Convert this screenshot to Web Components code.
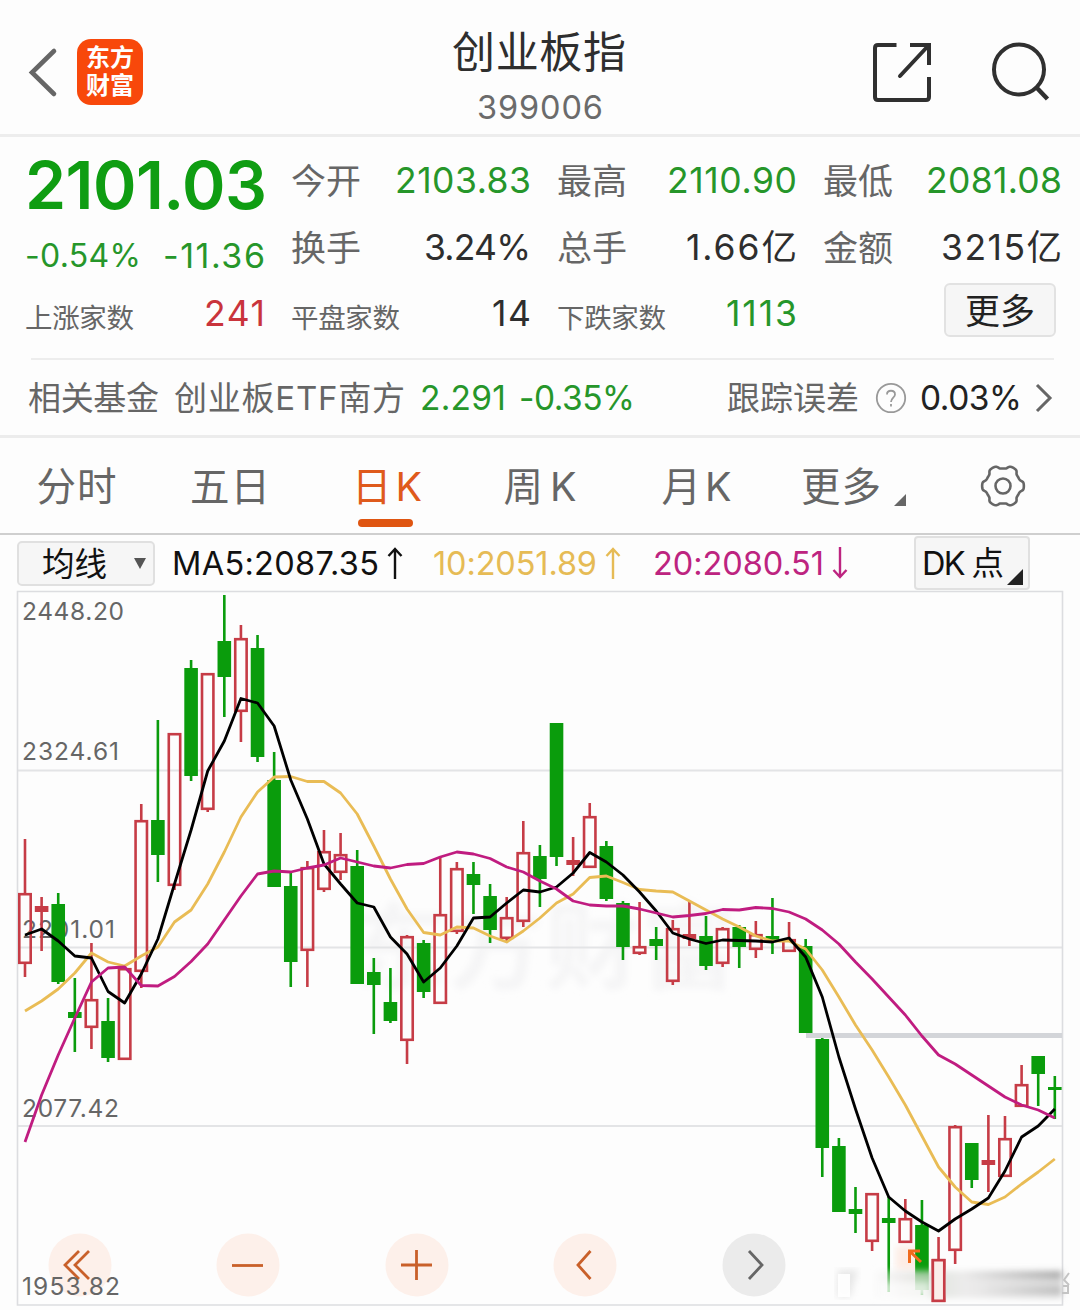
<!DOCTYPE html>
<html lang="zh-CN">
<head>
<meta charset="utf-8">
<title>创业板指 399006</title>
<style>
  body {
    margin: 0;
    background: #fdfdfd;
    font-family: Inter, "Noto Sans CJK SC", sans-serif;
    font-weight: 400;
    color: #2e2e2e;
  }
</style>
</head>
<body>
<stock-page></stock-page>
<script>
// Text run whose letter spacing is adjusted so that it fills `span` pixels.
class TrackedText extends HTMLElement {
  constructor() {
    super();
    this.attachShadow({ mode: "open" });
    this.shadowRoot.innerHTML = `
      <style>
        :host { display: inline-block; white-space: nowrap; flex: none; }
        span { display: inline-block; }
      </style>
      <span><slot></slot></span>
    `;
  }

  connectedCallback() {
    const run = this.shadowRoot.querySelector("span");
    const target = Number(this.getAttribute("span"));
    const count = this.textContent.length;
    if (!target || count < 2) {
      return;
    }
    const spacing = (target - run.getBoundingClientRect().width) / (count - 1);
    run.style.letterSpacing = `${spacing}px`;
    run.style.marginRight = `${-spacing}px`;
  }
}

class StockHeader extends HTMLElement {
  constructor() {
    super();
    this.attachShadow({ mode: "open" });
    this.shadowRoot.innerHTML = `
      <style>
        :host {
          display: grid;
          grid-template-columns: 440px 200px 440px;
          height: 134px;
          border-bottom: 3px solid #ededed;
        }
        .left { display: flex; align-items: center; padding: 10px 0 0 27px; height: 124px; gap: 19px; }
        .logo {
          display: flex;
          flex-direction: column;
          justify-content: center;
          width: 66px;
          height: 66px;
          border-radius: 14px;
          background: #f8480b;
          color: #fff;
          font-size: 24px;
          font-weight: 700;
          line-height: 28px;
          text-align: center;
        }
        .title { display: flex; flex-direction: column; align-items: center; padding: 22px 2px 0 0; }
        h1 { margin: 0; font-size: 43px; font-weight: 400; line-height: 60px; }
        .code { margin: 6px 0 0 2px; font-size: 32.5px; line-height: 40px; color: #6b6b6b; }
        .right { display: flex; justify-content: flex-end; gap: 56px; padding: 38px 25px 0 0; }
        svg { display: block; fill: none; }
      </style>
      <div class="left">
        <svg width="31" height="52" viewBox="0 0 31 52" stroke="#666" stroke-width="4.6" stroke-linecap="round">
          <path d="M27 5 5 26.500l22 21.500"/>
        </svg>
        <div class="logo"><span>东方</span><span>财富</span></div>
      </div>
      <div class="title">
        <h1><tracked-text span="174">创业板指</tracked-text></h1>
        <div class="code"><tracked-text span="126">399006</tracked-text></div>
      </div>
      <div class="right">
        <svg width="66" height="68" viewBox="0 0 66 68" stroke="#303030" stroke-width="4">
          <path d="M29.500 7H11q-3 0-3 3v49q0 3 3 3h48q3 0 3-3V39M43 7h19v20"/>
          <path d="M61 8 33 38" stroke-linecap="round"/>
        </svg>
        <svg width="66" height="68" viewBox="0 0 66 68" stroke="#303030" stroke-width="4">
          <circle cx="30" cy="31.500" r="25"/>
          <path d="M47.500 49.500 58.500 61" stroke-width="4.500"/>
        </svg>
      </div>
    `;
  }
}

class QuoteCell extends HTMLElement {
  constructor() {
    super();
    this.attachShadow({ mode: "open" });
    this.shadowRoot.innerHTML = `
      <style>
        :host { display: flex; justify-content: space-between; align-items: center; height: 66.5px; font-size: 35.5px; line-height: 50px; }
        .label { color: #666; font-size: 35px; }
        :host([small]) .label { font-size: 27.5px; padding-top: 8px; }
        :host([tone="down"]) .value { color: #26962a; }
        :host([tone="up"]) .value { color: #c9343c; }
      </style>
      <span class="label"><slot name="label"></slot></span>
      <span class="value"><slot></slot></span>
    `;
  }
}

class QuoteBoard extends HTMLElement {
  constructor() {
    super();
    this.attachShadow({ mode: "open" });
    this.shadowRoot.innerHTML = `
      <style>
        :host { display: block; height: 221px; border-bottom: 2px solid #ededed; margin: 0 26px 0 31px; }
        .grid {
          display: grid;
          grid-template-columns: 240px 240px 240px 239px;
          column-gap: 26px;
          margin: 0 -10px 0 -6px;
          padding-top: 11px;
        }
        .last { grid-row: span 2; height: 133px; }
        .price { height: 74px; font-size: 66px; font-weight: 600; line-height: 74px; color: #0f9d12; }
        .change { display: flex; justify-content: space-between; align-items: center; height: 58px; padding-top: 10px; box-sizing: border-box; color: #26962a; font-size: 34px; line-height: 40px; }
        .change :first-child { font-size: 32px; }
        .more { text-align: right; padding-top: 2px; }
        button {
          width: 112px;
          height: 54px;
          margin: 0 6px 0 0;
          padding: 3px 0 0;
          border: 2px solid #e2e2e2;
          border-radius: 6px;
          background: #f6f6f6;
          color: #222;
          font: inherit;
          font-size: 35px;
          line-height: 47px;
        }
      </style>
      <div class="grid">
        <div class="last">
          <div class="price"><tracked-text span="242">2101.03</tracked-text></div>
          <div class="change"><tracked-text span="116">-0.54%</tracked-text><tracked-text span="102">-11.36</tracked-text></div>
        </div>
        <quote-cell tone="down"><span slot="label">今开</span><tracked-text span="136">2103.83</tracked-text></quote-cell>
        <quote-cell tone="down"><span slot="label">最高</span><tracked-text span="130">2110.90</tracked-text></quote-cell>
        <quote-cell tone="down"><span slot="label">最低</span><tracked-text span="136">2081.08</tracked-text></quote-cell>
        <quote-cell><span slot="label">换手</span><tracked-text span="107">3.24%</tracked-text></quote-cell>
        <quote-cell><span slot="label">总手</span><tracked-text span="111">1.66亿</tracked-text></quote-cell>
        <quote-cell><span slot="label">金额</span><tracked-text span="121">3215亿</tracked-text></quote-cell>
        <quote-cell small tone="up"><tracked-text slot="label" span="109">上涨家数</tracked-text><tracked-text span="61">241</tracked-text></quote-cell>
        <quote-cell small><tracked-text slot="label" span="109">平盘家数</tracked-text><tracked-text span="39">14</tracked-text></quote-cell>
        <quote-cell small tone="down"><tracked-text slot="label" span="109">下跌家数</tracked-text><tracked-text span="71">1113</tracked-text></quote-cell>
        <div class="more"><button>更多</button></div>
      </div>
    `;
  }
}

class FundRow extends HTMLElement {
  constructor() {
    super();
    this.attachShadow({ mode: "open" });
    this.shadowRoot.innerHTML = `
      <style>
        :host {
          display: flex;
          align-items: center;
          height: 74px;
          padding: 1px 26px 0 28px;
          border-bottom: 3px solid #ececec;
          font-size: 33.5px;
          line-height: 50px;
          color: #666;
        }
        .down { color: #26962a; }
        .name { margin: 0 15px 0 15px; }
        .rate { margin-left: 13px; }
        .error { margin-left: auto; }
        .cjk { font-size: 33px; }
        .value { color: #222; }
        svg { display: block; fill: none; flex: none; }
        .help { margin: 0 13px 0 16px; }
        .arrow { margin-left: 12px; }
      </style>
      <tracked-text class="cjk" span="131">相关基金</tracked-text>
      <tracked-text class="cjk name" span="231">创业板ETF南方</tracked-text>
      <tracked-text class="down" span="86">2.291</tracked-text>
      <tracked-text class="down rate" span="116">-0.35%</tracked-text>
      <tracked-text class="cjk error" span="132">跟踪误差</tracked-text>
      <svg class="help" width="32" height="32" viewBox="0 0 32 32" stroke="#999" stroke-width="1.800">
        <circle cx="16" cy="16" r="14.200"/>
        <path d="M12 12.500c0-5 8-5 8 0 0 3-4 3.500-4 7.500M16 22v2.500"/>
      </svg>
      <tracked-text class="value" span="102">0.03%</tracked-text>
      <svg class="arrow" width="20" height="30" viewBox="0 0 20 30" stroke="#666" stroke-width="3">
        <path d="M3 2l13 13L3 28"/>
      </svg>
    `;
  }
}

class PeriodTabs extends HTMLElement {
  constructor() {
    super();
    this.attachShadow({ mode: "open" });
    this.shadowRoot.innerHTML = `
      <style>
        :host {
          display: grid;
          grid-template-columns: 153px 154px 160px 146px 167px 147px 152px;
          justify-items: center;
          height: 95px;
          border-bottom: 2px solid #cfcfcf;
          font-size: 39.5px;
          line-height: 58px;
          color: #666;
        }
        .tab { display: flex; flex-direction: column; align-items: center; padding-top: 20px; }
        .active { color: #df5a1c; }
        .active::after { content: ""; width: 55px; height: 8px; margin: 3px 4px 0 0; border-radius: 4px; background: #df5511; }
        .more { flex-direction: row; align-items: flex-start; gap: 13px; }
        .more::after { content: ""; margin-top: 36px; border-style: solid; border-width: 0 0 12px 12px; border-color: transparent transparent #666; }
        svg { display: block; margin-top: 24px; fill: none; }
      </style>
      <div class="tab"><tracked-text span="80">分时</tracked-text></div>
      <div class="tab"><tracked-text span="80">五日</tracked-text></div>
      <div class="tab active"><tracked-text span="70">日 K</tracked-text></div>
      <div class="tab"><tracked-text span="73">周 K</tracked-text></div>
      <div class="tab"><tracked-text span="70">月 K</tracked-text></div>
      <div class="tab more"><tracked-text span="80">更多</tracked-text></div>
      <svg width="48" height="48" viewBox="-24 -24 48 48" stroke="#666" stroke-width="2.600" stroke-linejoin="round">
        <path id="gear"/>
        <circle r="7.500"/>
      </svg>
    `;
    this.shadowRoot.querySelector("#gear").setAttribute("d", this._gearPath());
  }

  // Six soft lobes, one of them pointing to each side.
  _gearPath() {
    const points = [];
    for (let deg = 0; deg < 360; deg += 3) {
      const t = (deg * Math.PI) / 180;
      const r = 19.2 + 1.7 * Math.tanh(2.2 * Math.cos(6 * t));
      points.push(`${(r * Math.cos(t)).toFixed(2)} ${(r * Math.sin(t)).toFixed(2)}`);
    }
    return `M${points.join("L")}Z`;
  }
}

class MaLegend extends HTMLElement {
  constructor() {
    super();
    this.attachShadow({ mode: "open" });
    this.shadowRoot.innerHTML = `
      <style>
        :host { display: flex; align-items: flex-start; height: 55px; padding-left: 17px; font-size: 32.5px; line-height: 42px; color: #111; }
        .select, .dk { display: flex; box-sizing: border-box; border: 2px solid #e0e0e0; background: #f6f6f6; }
        .select { width: 138px; height: 45px; margin: 6px 17px 0 0; padding: 3px 7px 0 23px; border-radius: 5px; justify-content: space-between; align-items: center; }
        .select::after { content: ""; margin-bottom: 3px; border: 6.5px solid transparent; border-top: 11px solid #555; border-bottom: 0; }
        .ma { display: flex; align-items: center; margin-top: 8px; }
        .ma svg { display: block; margin: 0 0 2px 8px; fill: none; stroke: currentColor; stroke-width: 2.4; }
        .ma10 { margin-left: 30px; color: #e6bb55; }
        .ma20 { margin-left: 32px; color: #bd2480; }
        .dk { width: 116px; height: 54px; margin: 1px 0 0 66px; padding: 5px 5px 0 6px; border-radius: 4px; justify-content: space-between; }
        .dk::after { content: ""; align-self: flex-end; margin-bottom: 3px; border-style: solid; border-width: 0 0 16px 16px; border-color: transparent transparent #222; }
      </style>
      <div class="select"><tracked-text span="65">均线</tracked-text></div>
      <div class="ma"><tracked-text span="207">MA5:2087.35</tracked-text>
        <svg width="16" height="34" viewBox="0 0 16 34"><path d="M8 33V3M1.500 10 8 3l6.500 7"/></svg>
      </div>
      <div class="ma ma10"><tracked-text span="164">10:2051.89</tracked-text>
        <svg width="16" height="34" viewBox="0 0 16 34"><path d="M8 33V3M1.500 10 8 3l6.500 7"/></svg>
      </div>
      <div class="ma ma20"><tracked-text span="171">20:2080.51</tracked-text>
        <svg width="16" height="34" viewBox="0 0 16 34"><path d="M8 1v30M1.500 24 8 31l6.500-7"/></svg>
      </div>
      <div class="dk"><tracked-text span="82">DK 点</tracked-text></div>
    `;
  }
}

// Each candle: direction, high, body top, body bottom, low.
const CANDLES = [
  ["u", 839, 893, 964, 977], ["u", 897, 906, 912, 951], ["d", 893, 904, 982, 984],
  ["d", 978, 1012, 1018, 1052], ["u", 943, 999, 1028, 1049], ["d", 998, 1021, 1058, 1062],
  ["u", 967, 968, 1060, 1060], ["u", 804, 820, 972, 988], ["d", 720, 820, 855, 882],
  ["u", 733, 733, 886, 890], ["d", 660, 668, 776, 781], ["u", 673, 673, 810, 812],
  ["d", 595, 641, 677, 717], ["u", 625, 638, 712, 742], ["d", 635, 648, 757, 762],
  ["d", 752, 780, 887, 887], ["d", 871, 886, 962, 987], ["u", 861, 867, 951, 987],
  ["u", 830, 851, 890, 892], ["u", 833, 854, 873, 880], ["d", 850, 866, 984, 984],
  ["d", 958, 972, 985, 1034], ["d", 968, 1002, 1021, 1023], ["u", 935, 936, 1041, 1064],
  ["d", 940, 943, 992, 998], ["u", 857, 914, 1004, 1004], ["u", 862, 868, 932, 934],
  ["d", 862, 874, 885, 914], ["d", 884, 896, 930, 943], ["u", 897, 917, 939, 941],
  ["u", 821, 852, 922, 927], ["d", 845, 856, 879, 907], ["d", 723, 723, 857, 866],
  ["u", 837, 860, 865, 876], ["u", 803, 816, 868, 868], ["d", 841, 846, 899, 901],
  ["d", 901, 903, 947, 960], ["u", 902, 946, 954, 955], ["d", 927, 939, 946, 960],
  ["u", 920, 928, 982, 985], ["u", 902, 934, 939, 946], ["d", 916, 936, 966, 970],
  ["u", 927, 928, 964, 967], ["d", 925, 927, 947, 968], ["u", 921, 934, 950, 958],
  ["d", 898, 936, 940, 954], ["u", 922, 939, 952, 952], ["d", 939, 946, 1033, 1033],
  ["d", 1038, 1039, 1148, 1177], ["d", 1138, 1146, 1212, 1212], ["d", 1187, 1209, 1214, 1233],
  ["u", 1193, 1193, 1242, 1251], ["d", 1197, 1218, 1223, 1292], ["u", 1199, 1218, 1243, 1243],
  ["d", 1200, 1225, 1290, 1295], ["u", 1237, 1259, 1302, 1302], ["u", 1125, 1126, 1251, 1264],
  ["d", 1143, 1143, 1180, 1188], ["u", 1115, 1160, 1165, 1192], ["u", 1116, 1138, 1177, 1177],
  ["u", 1065, 1084, 1107, 1107], ["d", 1056, 1056, 1074, 1106], ["d", 1076, 1087, 1090, 1119],
];

const AVERAGES = {
  "#e9bc55": [1011, 1001, 989, 973, 953, 962, 966, 956, 947, 922, 910, 884, 852, 817, 792, 777, 776.5, 781.5, 781.5, 793, 814, 846, 879, 909, 932.5, 935, 927, 928, 936, 942, 931, 918, 903, 894, 877.5, 876, 882.5, 889.5, 891, 892, 901, 910, 919, 927, 936, 941, 941, 949, 970, 997, 1025, 1050, 1077, 1105, 1136, 1167, 1187, 1202, 1204.5, 1197, 1184, 1172, 1159],
  "#000": [935, 929, 941, 956, 958, 991.5, 1003, 974, 939, 884, 830, 771, 741, 698.5, 703, 726, 780, 819, 864, 884, 903, 907, 937, 954, 982, 968, 946, 918, 917, 903, 890, 892, 887, 873, 852.5, 862, 875, 892, 911, 933, 939, 943.5, 940, 940.5, 941, 942, 938, 957, 997, 1057, 1109, 1158, 1197, 1211, 1222, 1231, 1219, 1209, 1198, 1171, 1137, 1126, 1109],
  "#c01c80": [1142, 1095, 1055, 1018, 982, 968, 967, 985.5, 986, 976.5, 961.5, 944, 920, 896, 874, 871, 872, 868, 865, 858, 862, 866, 868, 864.5, 863.5, 857, 852, 854, 858.5, 867, 872, 881, 889, 901, 905, 906, 906, 909, 913, 917, 915.5, 913.5, 909.5, 910, 907.5, 908.5, 912, 919, 930, 944, 962, 979, 997, 1015, 1036, 1055, 1064, 1075, 1086, 1097, 1105, 1110, 1118],
};

class KlineChart extends HTMLElement {
  constructor() {
    super();
    this.attachShadow({ mode: "open" });
    this.render();
  }

  _x(index) {
    return 25 + index * 16.61;
  }

  _candle([direction, high, top, bottom, low], index) {
    const x = this._x(index);
    const color = direction === "u" ? "#c63c46" : "#0a9c0c";
    const hollow = direction === "u" && bottom - top > 7;
    const body = hollow
      ? `<rect x="${x - 5.7}" y="${top + 1.2}" width="11.400" height="${bottom - top - 2.4}" fill="none" stroke="${color}" stroke-width="2.600"/>`
      : `<rect x="${x - 6.8}" y="${top}" width="13.600" height="${bottom - top}" fill="${color}"/>`;
    return `<path d="M${x} ${high}V${top}M${x} ${bottom}V${low}" stroke="${color}" stroke-width="2.600"/>${body}`;
  }

  _average([color, values]) {
    const points = values.map((y, index) => `${this._x(index)},${y}`).join(" ");
    return `<polyline points="${points}" fill="none" stroke="${color}" stroke-width="2.800" stroke-linejoin="round"/>`;
  }

  _label(text, y, width) {
    return `<text x="22" y="${y}" textLength="${width}">${text}</text>`;
  }

  _control(x, icon, tone = "warm") {
    return `<g transform="translate(${x} 1265)" class="${tone}"><circle r="31.500"/><path d="${icon}"/></g>`;
  }

  render() {
    this.shadowRoot.innerHTML = `
      <style>
        :host { display: block; height: 720px; }
        svg { display: block; }
        text { font-size: 24.5px; fill: #666; }
        .mark { font-size: 94px; font-weight: 700; fill: #f5f5f6; }
        .warm circle { fill: #fdf0ea; }
        .warm path { fill: none; stroke: #c9602a; stroke-width: 2.8; }
        .gray circle { fill: #ebebeb; }
        .gray path { fill: none; stroke: #666; stroke-width: 2.8; }
      </style>
      <svg width="1080" height="720" viewBox="0 590 1080 720">
        <defs>
          <filter id="soft"><feGaussianBlur stdDeviation="3.500"/></filter>
          <filter id="smear" x="-10%" y="-30%" width="120%" height="160%"><feGaussianBlur stdDeviation="3 3"/></filter>
          <linearGradient id="haze" x1="0" x2="1" y1="0" y2="0">
            <stop offset="0" stop-color="#eee" stop-opacity="0.200"/>
            <stop offset="0.150" stop-color="#e8e6e4" stop-opacity="0.750"/>
            <stop offset="0.300" stop-color="#d6dcd4" stop-opacity="0.750"/>
            <stop offset="0.480" stop-color="#e6e5e5" stop-opacity="0.750"/>
            <stop offset="1" stop-color="#c8c8c8" stop-opacity="0.750"/>
          </linearGradient>
          <linearGradient id="band" x1="0" x2="1" y1="0" y2="0">
            <stop offset="0" stop-color="#999" stop-opacity="0"/>
            <stop offset="1" stop-color="#888" stop-opacity="0.600"/>
          </linearGradient>
        </defs>
        <text class="mark" x="352" y="982" textLength="384" filter="url(#soft)">东方财富</text>
        <path d="M17 770.500H1062M17 947.500H1062M17 1126H1062" stroke="#e3e4e6" stroke-width="2"/>
        <path d="M17.500 591.500H1062.500V1305H17.500Z" fill="none" stroke="#dcdde0" stroke-width="1.600"/>
        <path d="M806 1035.500H1062" stroke="#d3d5d9" stroke-width="5"/>
        ${this._control(80, "M-1-14-15 0-1 14M9-14-5 0 9 14")}
        ${this._control(248, "M-16 0.500H15")}
        ${this._control(417, "M-16 0H15M-0.500-15V15")}
        ${this._control(585, "M5.500-14-7 0 5.500 14")}
        ${this._control(754, "M-5-14 8 0-5 14", "gray")}
        ${this._label("2448.20", 619.5, 102)}
        ${this._label("2324.61", 759.5, 97)}
        ${this._label("2201.01", 938, 93)}
        ${this._label("2077.42", 1117, 97)}
        ${this._label("1953.82", 1294.5, 98)}
        <rect x="896" y="1246" width="26" height="24" fill="#fdece4" filter="url(#soft)"/>
        ${CANDLES.map((candle, index) => this._candle(candle, index)).join("")}
        ${Object.entries(AVERAGES).map((entry) => this._average(entry)).join("")}
        <path d="M909.500 1263V1251H920M911 1252.500 921 1262" fill="none" stroke="#f06a1c" stroke-width="3"/>
        <g filter="url(#smear)">
          <rect x="875" y="1271" width="187" height="27" fill="url(#haze)"/>
          <rect x="880" y="1282" width="50" height="16" fill="#fff" opacity="0.600"/>
          <rect x="960" y="1271" width="102" height="7" fill="url(#band)"/>
          <rect x="980" y="1288" width="82" height="5" fill="url(#band)" opacity="0.700"/>
        </g>
        <path d="M838 1270H858L850 1297H837Z" fill="#ccc" opacity="0.450" filter="url(#soft)"/>
        <path d="M838 1274H850V1297H838Z" fill="#fff" opacity="0.900"/>
        <rect x="932.850" y="1260.200" width="11.400" height="40.600" fill="#fbeeea" stroke="#c63c46" stroke-width="2.600"/>
        <path d="M1069 1273l-5 7 5 5M1063 1286h5v7h-6" fill="none" stroke="#c4c4c4" stroke-width="2"/>
      </svg>
    `;
  }
}

class StockPage extends HTMLElement {
  constructor() {
    super();
    this.attachShadow({ mode: "open" });
  }

  connectedCallback() {
    this.shadowRoot.innerHTML = `
      <style>
        :host { display: flex; flex-direction: column; width: 1080px; height: 1310px; overflow: hidden; }
        :host > * { flex: none; }
      </style>
      <stock-header></stock-header>
      <quote-board></quote-board>
      <fund-row></fund-row>
      <period-tabs></period-tabs>
      <ma-legend></ma-legend>
      <kline-chart></kline-chart>
    `;
  }
}

customElements.define("tracked-text", TrackedText);
customElements.define("quote-cell", QuoteCell);
customElements.define("stock-header", StockHeader);
customElements.define("quote-board", QuoteBoard);
customElements.define("fund-row", FundRow);
customElements.define("period-tabs", PeriodTabs);
customElements.define("ma-legend", MaLegend);
customElements.define("kline-chart", KlineChart);
customElements.define("stock-page", StockPage);
</script>
</body>
</html>
